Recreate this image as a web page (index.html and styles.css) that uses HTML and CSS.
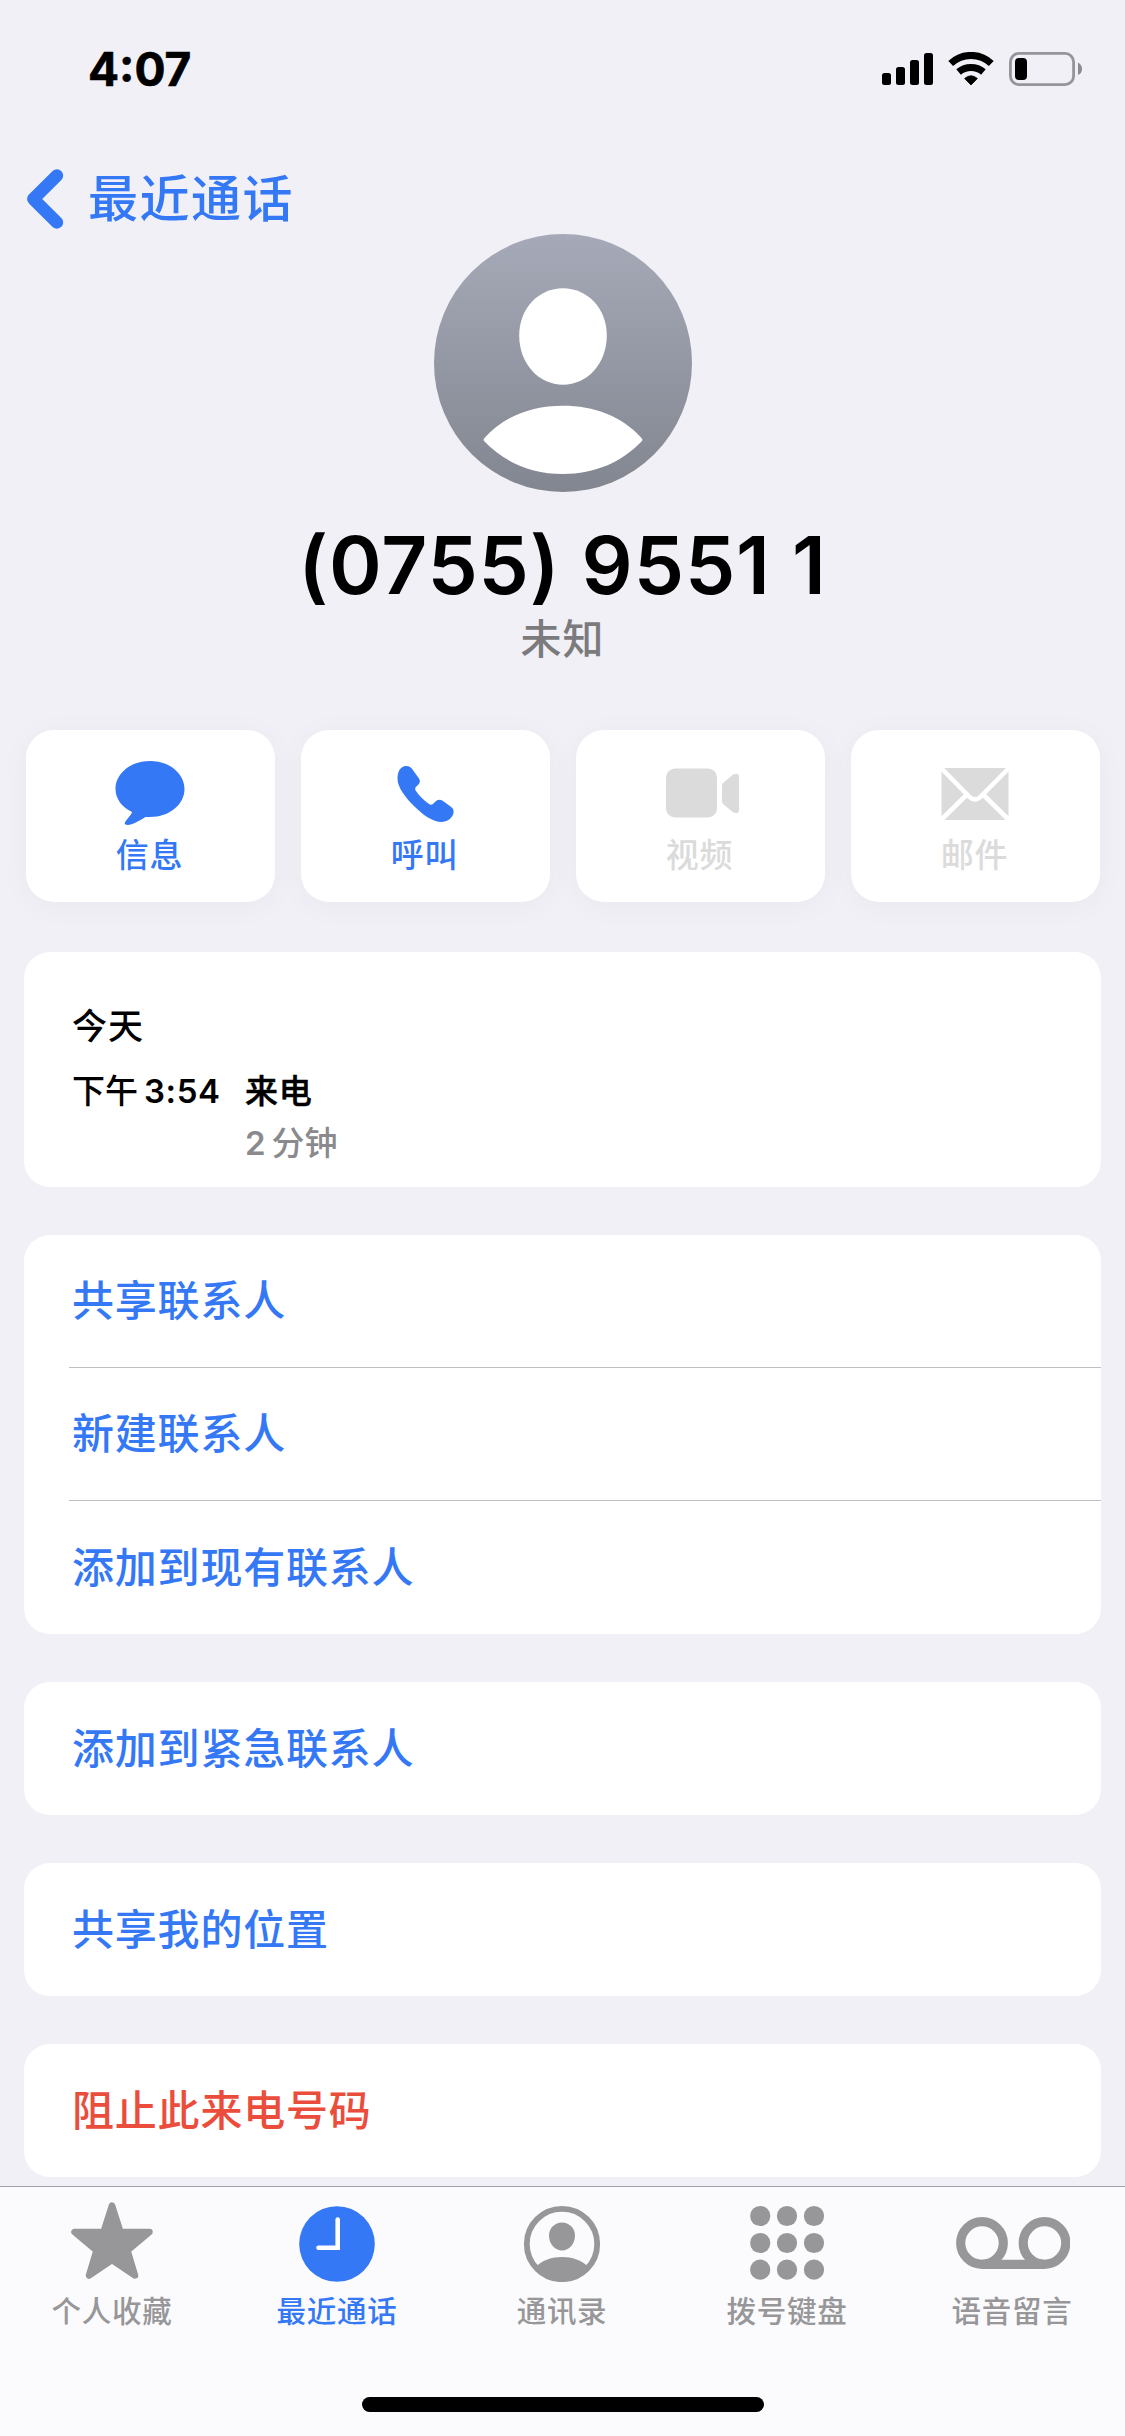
FILE: index.html
```html
<!DOCTYPE html>
<html lang="zh-CN">
<head>
<meta charset="utf-8">
<title>(0755) 95511</title>
<link rel="stylesheet" href="styles.css">
</head>
<body>
<header class="status">
  <span class="time">4:07</span>
  <div class="status-icons">
    <svg class="signal" width="51" height="34" viewBox="0 0 51 34"><rect x="0" y="21" width="9" height="12" rx="2.5"/><rect x="14" y="15" width="9" height="18" rx="2.5"/><rect x="28" y="8" width="9" height="25" rx="2.5"/><rect x="42" y="1" width="9" height="32" rx="2.5"/></svg>
    <svg class="wifi" width="46" height="34" viewBox="0 0 46 34"><g fill="none" stroke="#000" stroke-width="7"><path d="M2.700 11.500A29.500 29.500 0 0 1 43.300 11.500"/><path d="M10.600 20A19 19 0 0 1 35.400 20"/></g><path d="M16.600 26.500Q23 21 29.400 26.500L23 33Z" stroke="#000" stroke-width=".8" stroke-linejoin="round"/></svg>
    <svg class="battery" width="74" height="34" viewBox="0 0 74 34"><rect x="1.4" y="1.4" width="63.2" height="31.2" rx="8.5" fill="none" stroke="#959498" stroke-width="2.8"/><rect x="6" y="6" width="12" height="22" rx="4"/><path d="M69 10.5Q73 12.5 73 17T69 23Z" fill="#8b8b90"/></svg>
  </div>
</header>
<nav class="nav">
  <svg width="40" height="62" viewBox="0 0 40 62"><path d="M32 7.500L8.300 31L32 54.500" fill="none" stroke="#3478f6" stroke-width="12.400" stroke-linecap="round" stroke-linejoin="round"/></svg>
  <span>最近通话</span>
</nav>
<main class="content">
  <section class="contact">
    <svg width="258" height="258" viewBox="0 0 258 258">
      <defs><linearGradient id="avatar" x1="0" y1="0" x2="0" y2="1"><stop offset="0" stop-color="#a6aab8"/><stop offset="1" stop-color="#828690"/></linearGradient></defs>
      <circle cx="129" cy="129" r="129" fill="url(#avatar)"/>
      <path d="M129 54.3C153 54.3 172.8 74 172.8 101.5C172.8 130 153 150.7 129 150.7S85.200 130 85.200 101.5C85.200 74 105 54.300 129 54.300Z" fill="#fff"/>
      <path d="M50 207Q49 205.500 50.500 204C70 182 98 171.700 129 171.700S188 182 207.500 204Q209 205.500 208 207C188 228 161 240 129 240S70 228 50 207Z" fill="#fff"/>
    </svg>
    <h1>(0755) 955<span class="one">1</span>1</h1>
    <p class="sub">未知</p>
  </section>
  <section class="actions">
    <button class="action">
      <svg width="80" height="66" viewBox="0 0 80 66"><path d="M40 1C59.500 1 74.500 13.500 74.500 29S59.500 57 40 57Q37 57 35.500 57C29 61 22 65 18 65C14.500 65 14 63.500 15.500 61.500C17 59 22 54 22 52C12 47 5.500 39 5.500 29C5.500 13.500 20.500 1 40 1Z"/></svg>
      <span>信息</span>
    </button>
    <button class="action">
      <svg width="80" height="66" viewBox="0 0 80 66"><path d="M21 6C24.500 6 26 7.500 27.500 9.500L34 18.500C35.500 21 35 23 33 25C31 27 29 28 31 31C35 37 41 42 45 44.500C47 45.200 48 44 50 42C52.500 39.300 55 39 58 41L65.500 46.500C68 48.500 69 49.500 68.500 53C67.500 58 62 62 56.500 62C48 62 38 55 29.500 46.500C20 37 12.500 27.500 12.500 18.500C12.500 11 16 6 21 6Z"/></svg>
      <span>呼叫</span>
    </button>
    <button class="action off">
      <svg width="80" height="66" viewBox="0 0 80 66"><rect x="6" y="8.500" width="51" height="49" rx="9"/><path d="M62 25.500Q62 23.500 63.500 22.500L73.500 14.300Q79 12.500 79 17V50Q79 54.500 73.500 52.500L63.500 44.500Q62 43 62 41.500Z"/></svg>
      <span>视频</span>
    </button>
    <button class="action off">
      <svg width="80" height="66" viewBox="0 0 80 66"><rect x="6.500" y="8" width="67" height="52" rx="4"/><path d="M7 9L34.500 36.800Q40 42 45.500 36.800L73 9M6 60L32.500 34M74 60L47.500 34" fill="none" stroke="#fff" stroke-width="4.600"/></svg>
      <span>邮件</span>
    </button>
  </section>
  <section class="card call">
    <h2>今天</h2>
    <div class="call-grid">
      <span class="when">下午<span class="clock">3:54</span></span>
      <div>
        <p class="kind">来电</p>
        <p class="length"><span class="num">2</span>分钟</p>
      </div>
    </div>
  </section>
  <section class="card"><a class="row">共享联系人</a><a class="row">新建联系人</a><a class="row">添加到现有联系人</a></section>
  <section class="card"><a class="row">添加到紧急联系人</a></section>
  <section class="card"><a class="row">共享我的位置</a></section>
  <section class="card"><a class="row danger">阻止此来电号码</a></section>
</main>
<footer class="tabbar">
  <div class="tabs">
    <a class="tab"><svg width="84" height="80" viewBox="0 0 84 80"><path d="M42 3.500L50.500 30H79.500L57.500 48.500L65 73.500L42 58L19 73.500L26.500 48.500L4.500 30H33.500Z" stroke="currentColor" stroke-width="6.500" stroke-linejoin="round"/></svg><span>个人收藏</span></a>
    <a class="tab active"><svg width="84" height="80" viewBox="0 0 84 80"><circle cx="42" cy="42" r="37.800"/><path d="M42.700 17.500V45.700H23.500" fill="none" stroke="#fff" stroke-width="4.600" stroke-linecap="round"/></svg><span>最近通话</span></a>
    <a class="tab"><svg width="84" height="80" viewBox="0 0 84 80"><circle cx="42" cy="42" r="35.200" fill="none" stroke="currentColor" stroke-width="5.800"/><path d="M42 20.500C49 20.500 55 26 55 33.500C55 42 49 48.500 42 48.500S29 42 29 33.500C29 26 35 20.500 42 20.500Z"/><path d="M16 65C22 58 32 55 42 55S62 58 68 65C60 75 51 79 42 79S24 75 16 65Z"/></svg><span>通讯录</span></a>
    <a class="tab"><svg width="84" height="80" viewBox="0 0 84 80"><g id="dots"><circle cx="15.200" cy="14" r="10.100"/><circle cx="42" cy="14" r="10.100"/><circle cx="69" cy="14" r="10.100"/></g><use href="#dots" y="27"/><use href="#dots" y="53.700"/></svg><span>拨号键盘</span></a>
    <a class="tab"><svg width="116" height="80" viewBox="0 0 116 80"><g fill="none" stroke="currentColor" stroke-width="9.200"><circle cx="28" cy="41" r="21.300"/><circle cx="90.500" cy="41" r="21.300"/><path d="M28 62.400H90.500"/></g></svg><span>语音留言</span></a>
  </div>
  <div class="home"></div>
</footer>
</body>
</html>
```
FILE: styles.css
```css
* { box-sizing: border-box; margin: 0; padding: 0; }
body {
  width: 1125px; height: 2436px; overflow: hidden;
  display: flex; flex-direction: column;
  background: #f1f0f6; color: #000;
  font-family: Inter, "Noto Sans CJK SC", sans-serif;
  font-weight: 500;
}
svg { display: block; flex: none; fill: currentColor; }
.status { height: 132px; padding: 47px 42px 0 88px; display: flex; justify-content: space-between; flex: none; }
.time { font-size: 46px; font-weight: 700; line-height: 45px; -webkit-text-stroke: .6px currentColor; }
.status-icons { display: flex; padding-top: 5px; }
.wifi { margin-left: 15px; margin-right: 15px; }
.nav { height: 102px; flex: none; padding: 31px 0 0 25px; display: flex; align-items: center; color: #3478f6; font-size: 50px; line-height: 60px; letter-spacing: 1.5px; }
.nav svg { margin-right: 23px; }
.content { flex: 1; min-height: 0; overflow: hidden; padding: 0 24px; }
.contact { display: flex; flex-direction: column; align-items: center; }
h1 { margin-top: 23px; font-size: 80px; font-weight: 600; line-height: 100px; letter-spacing: .9px; white-space: pre; font-feature-settings: "calt" 0; }
.one { letter-spacing: 22px; }
.sub { margin-top: 2px; font-size: 41px; line-height: 44px; color: #7b7b7e; letter-spacing: 1px; }
.actions { margin: 69px 1.5px 50px; display: grid; grid-template-columns: repeat(4, 249px); justify-content: space-between; }
.action {
  height: 172px; border: 0; border-radius: 28px; background: #fff; color: #3478f6;
  box-shadow: 0 4px 32px rgba(0, 0, 20, .035);
  display: flex; flex-direction: column; align-items: center; padding: 30px 1px 0 0;
  font-family: inherit; font-weight: 500; font-size: 33px; line-height: 44px; letter-spacing: .8px;
}
.action span { margin-top: 7px; }
.off { color: #dbdbdb; }
.card { background: #fff; border-radius: 26px; margin-bottom: 48px; }
.call { height: 235px; padding: 52px 48px 0; font-size: 33px; line-height: 44px; }
.call h2 { font-size: 35px; font-weight: 500; letter-spacing: 1px; }
.call-grid { margin-top: 21px; display: grid; grid-template-columns: 173px 1fr; }
.when { white-space: nowrap; }
.clock { margin-left: 6px; font-weight: 600; letter-spacing: .6px; }
.kind { letter-spacing: .8px; -webkit-text-stroke: .5px currentColor; }
.length { margin-top: 8px; color: #8a8a8e; }
.num { margin-right: 6px; font-weight: 600; }
.row { display: flex; align-items: center; height: 133px; margin-left: 45px; padding-left: 3px; font-size: 42px; line-height: 60px; letter-spacing: .8px; color: #3478f6; }
.row:first-child:not(:last-child) { height: 132px; }
.row + .row { border-top: 1px solid #c0c0c3; }
.row + .row:last-child { height: 134px; }
.danger { color: #eb4d3d; }
.tabbar { height: 250px; flex: none; border-top: 1px solid #a4a4a8; background: #fbfbfd; display: flex; flex-direction: column; align-items: center; }
.tabs { width: 1125px; display: grid; grid-template-columns: repeat(5, 225px); padding: 15px 0 85px; color: #979799; }
.tab { display: flex; flex-direction: column; align-items: center; padding-right: 1px; font-size: 29.5px; line-height: 36px; letter-spacing: .7px; }
.tab span { margin-top: 11px; }
.active { color: #3478f6; }
.home { width: 402px; height: 15px; border-radius: 8px; background: #000; margin-top: -17px; }
```
